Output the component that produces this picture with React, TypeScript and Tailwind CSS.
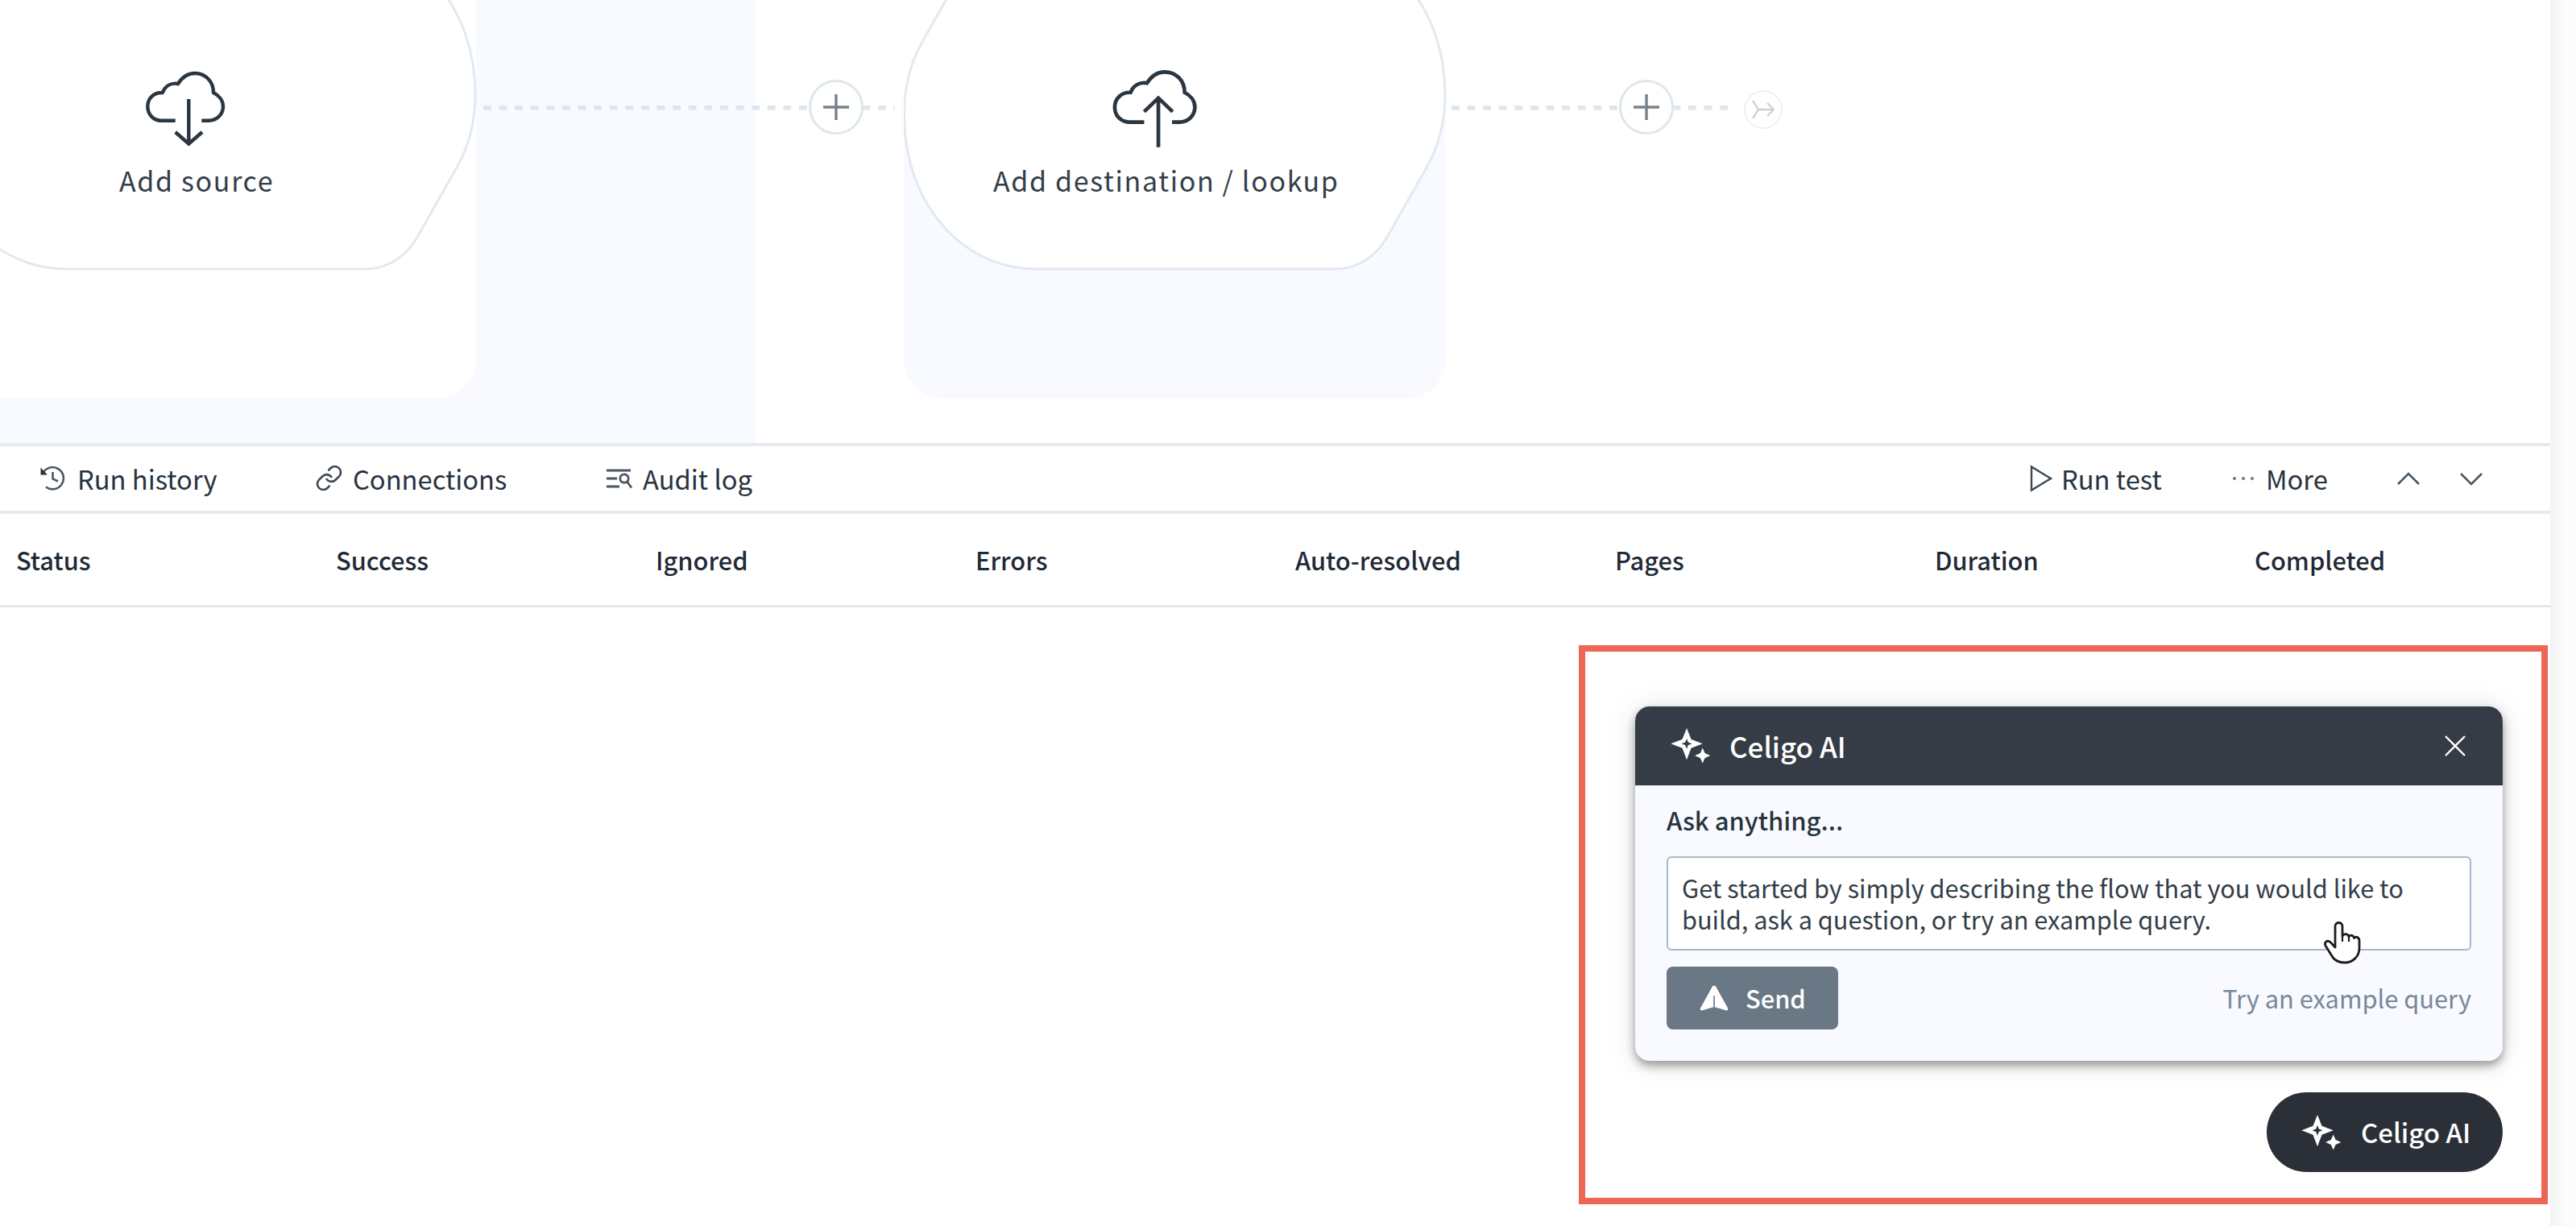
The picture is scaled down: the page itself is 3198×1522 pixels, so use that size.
import React from 'react';
import { Link } from 'lucide-react';

const columns = ['Status', 'Success', 'Ignored', 'Errors', 'Auto-resolved', 'Pages', 'Duration', 'Completed'];

const CLOUD =
    'M57.7 79.7H40C30.5 79.7 23.3 72 23.3 62.3C23.3 52 31 44.6 41.7 45C45 37 52 32.5 61 34C66 26 73 21 81.7 21C95 21 105 31 105 45C112 48.5 117 55 117 62.5C117 72 109 79.7 99 79.7H90.3';

const CloudIcon: React.FC<{ arrow: string; className: string }> = ({ arrow, className }) => (
    <svg viewBox="0 0 140 130" fill="none" stroke="#2b3640" strokeWidth="4.4" className={className}>
        <path d={CLOUD} />
        <path d={arrow} />
    </svg>
);

const NodeShape: React.FC = () => (
    <svg width="674" height="340" viewBox="0 0 674 340" className="absolute inset-0">
        <path
            d="M165 334H535C565 334 588 317 602 291L649 208C665 180 672 150 672 117C672 10 602 -74 507 -74H137C107 -74 84 -57 70 -31L23 52C7 80 0.500 110 0.500 143C0.500 250 70 334 165 334Z"
            fill="#fff"
            stroke="#e1eaf0"
            strokeWidth="3"
        />
    </svg>
);

const Sparkles: React.FC = () => (
    <svg width="50" height="44" viewBox="13 14 50 44" fill="#fff" className="shrink-0">
        <path
            fillRule="evenodd"
            d="M33 14L38.5 27.8L52.7 33.3L38.5 38.8L33 53.3L27.5 38.8L13.3 33.3L27.5 27.8ZM33 27L34.8 31.5L39.5 33.3L34.8 35.1L33 39.8L31.2 35.1L26.5 33.3L31.2 31.5Z"
        />
        <path d="M52.7 38.4L55.6 45.1L62.3 48L55.6 50.9L52.7 57.6L49.8 50.9L43.1 48L49.8 45.1Z" />
    </svg>
);

const AddButton: React.FC<{ className: string }> = ({ className }) => (
    <button className={`absolute size-[68px] rounded-full border-3 border-[#dde7ee] bg-white flex items-center justify-center ${className}`}>
        <svg width="34" height="34" viewBox="0 0 34 34" stroke="#76828e" strokeWidth="3.4">
            <path d="M17 1V33M1 17H33" />
        </svg>
    </button>
);

const FlowCanvas: React.FC = () => (
    <div className="relative h-[550px] overflow-hidden text-[#333e49]">
        <div className="absolute left-0 top-0 h-full w-[938px] bg-[#f8faff]" />

        {/* Wires */}
        <svg width="2200" height="550" className="absolute left-0 top-0" stroke="#dbe6ee" strokeWidth="5.4" strokeDasharray="9.8 9.8">
            <path d="M600 133.7H1111" />
            <path d="M1802 133.7H2146" />
        </svg>
        <AddButton className="left-[1004px] top-[99px]" />
        <AddButton className="left-[2010px] top-[99px]" />
        <div className="absolute left-[2165px] top-[112px] size-12 rounded-full border-2 border-[#edf2f6] bg-white flex items-center justify-center">
            <svg width="28" height="24" viewBox="0 0 28 24" fill="none" stroke="#cfd1d4" strokeWidth="2.4">
                <path d="M1 1L8 12L1 23M8 12H26M19 4L27 12L19 20" />
            </svg>
        </div>

        {/* Source */}
        <div className="absolute -left-[82px] -top-20 h-[575px] w-[673px] rounded-[50px] bg-white" />
        <div className="absolute -left-[82px] top-0 h-[340px] w-[672px]">
            <NodeShape />
            <CloudIcon arrow="M74.3 53V109M57.7 94L74.3 108.5L91 94" className="absolute left-[242px] top-[70px] w-[140px] h-[130px]" />
            <p className="absolute left-[230px] top-[199px] text-[34px] leading-[50px] tracking-[1.65px] whitespace-nowrap">Add source</p>
        </div>

        {/* Destination */}
        <div className="absolute left-[1122px] -top-20 h-[575px] w-[673px] rounded-[50px] bg-[#f8faff]" />
        <div className="absolute left-[1100px] top-0 h-[120px] w-[720px] bg-white" />
        <div className="absolute left-[1122px] top-0 h-[340px] w-[672px]">
            <NodeShape />
            <CloudIcon arrow="M74.3 52V109M57.7 67.5L74.3 51.5L91 67.5" className="absolute left-[237px] top-[67px] w-[149px] h-[138px]" />
            <p className="absolute left-[111px] top-[199px] text-[34px] leading-[50px] tracking-[1.65px] whitespace-nowrap">
                Add destination / lookup
            </p>
        </div>
    </div>
);

const Toolbar: React.FC = () => (
    <div className="flex h-[88px] items-center border-y-4 border-[#e3ebf1] pl-[49px] text-[32.7px]">
        <div className="flex w-[343px] items-center gap-[15px]">
            <svg width="32" height="32" viewBox="0 0 32 32" fill="none" stroke="#4a5661" strokeWidth="2.6">
                <path d="M3.5 11A13.6 13.6 0 1 1 8 26.5" />
                <path d="M1.5 2.5V11.5H10Z" fill="#2b3640" stroke="none" />
                <path d="M16.5 8V16.5L23 19.5" />
            </svg>
            Run history
        </div>
        <div className="flex w-[361px] items-center gap-[12px]">
            <Link size={35} strokeWidth={1.8} color="#3d4954" className="-ml-px" />
            Connections
        </div>
        <div className="flex items-center gap-[13px]">
            <svg width="32" height="28" viewBox="0 0 32 28" fill="none" stroke="#4a5661" strokeWidth="2.8">
                <path d="M0 4H30M0 14H13M0 24H16" />
                <circle cx="22" cy="14" r="5.2" />
                <path d="M25.5 18L31 25.5" />
            </svg>
            Audit log
        </div>

        <div className="ml-auto flex items-center">
            <div className="flex w-[251px] items-center gap-[11px]">
                <svg width="28" height="34" viewBox="0 0 28 34" fill="none" stroke="#3d4954" strokeWidth="2.4">
                    <path d="M2 2.5V31.5L26 17Z" />
                </svg>
                Run test
            </div>
            <div className="flex w-[205px] items-center gap-[14px]">
                <svg width="28" height="6" viewBox="0 0 28 6" fill="#6b7783">
                    <circle cx="3" cy="3" r="2" />
                    <circle cx="14" cy="3" r="2" />
                    <circle cx="25" cy="3" r="2" />
                </svg>
                More
            </div>
            <svg width="28" height="18" viewBox="0 0 28 18" fill="none" stroke="#4a5661" strokeWidth="2.6" className="mr-[50px]">
                <path d="M1 16L14 3L27 16" />
            </svg>
            <svg width="28" height="18" viewBox="0 0 28 18" fill="none" stroke="#4a5661" strokeWidth="2.6" className="mr-[84px] mt-[3px]">
                <path d="M1 2L14 15L27 2" />
            </svg>
        </div>
    </div>
);

const AssistantPanel: React.FC = () => (
    <div className="absolute left-[1960px] top-[801px] flex h-[694px] w-[1203px] flex-col items-end border-8 border-[#ed6555] pr-10 pt-[68px]">
        <div className="w-[1077px] h-[440px] mr-2 overflow-hidden rounded-[18px] bg-[#f8faff] shadow-[0_6px_12px_rgba(0,0,0,0.36),0_2px_36px_rgba(0,0,0,0.12)]">
            <div className="flex h-[98px] items-center bg-[#353c46] pl-11 pr-[45px] text-white">
                <Sparkles />
                <span className="ml-[23px] text-[35px] font-medium">Celigo AI</span>
                <svg width="28" height="28" viewBox="0 0 28 28" stroke="#fff" strokeWidth="2.4" className="ml-auto">
                    <path d="M2 2L26 26M26 2L2 26" />
                </svg>
            </div>
            <div className="px-[39px] pt-[21px]">
                <p className="text-[31px] leading-[44px] font-medium">Ask anything...</p>
                <div className="relative mt-[23px] h-[117px] rounded-md border-[2.5px] border-[#a9b8c6] bg-white pl-[17px] pt-[17px] text-[30.7px] leading-[39px] text-[#333e49]">
                    <p className="whitespace-nowrap">Get started by simply describing the flow that you would like to</p>
                    <p>build, ask a question, or try an example query.</p>
                    <svg width="46" height="54" viewBox="0 0 46 54" className="absolute left-[814px] top-[79px]">
                        <path
                            d="M14 32V6C14 0 23 0 23 6V18C25 14.5 30 15 31 19C33 16 37 17 37.5 20.5C40 18 44 19.5 44 24V33C44 44 35 51 26 51C17 51 12 47 9.500 42L2 30C0 26 4 22.500 8 25.500Z"
                            fill="#fff"
                            stroke="#1d1d1d"
                            strokeWidth="2.8"
                            strokeLinejoin="round"
                        />
                        <path d="M23 17V25M31 18V25" stroke="#1d1d1d" strokeWidth="2.2" />
                    </svg>
                </div>
                <div className="mt-5 flex h-[78px] items-center justify-between text-[30.8px]">
                    <button className="flex h-full w-[213px] items-center rounded-lg bg-[#6a7785] pl-[41px] font-medium text-white">
                        <svg width="36" height="32" viewBox="0 0 36 32" fill="#fff">
                            <path d="M18 0.500C19.200 0.500 20 1.200 20.600 2.400L35 28.500C36 30.500 34.500 31.800 32.500 31.200L18 27L3.500 31.200C1.500 31.800 0 30.500 1 28.500L15.400 2.400C16 1.200 16.800 0.500 18 0.500Z" />
                            <path d="M18 13V27" stroke="#6a7785" strokeWidth="1.6" />
                        </svg>
                        <span className="ml-[21px]">Send</span>
                    </button>
                    <span className="text-[#78879a]">Try an example query</span>
                </div>
            </div>
        </div>
        <button className="mr-2 mt-[39px] flex h-[99px] w-[293px] items-center rounded-full bg-[#2b3038] pl-[43px] text-[33px] font-medium text-white">
            <Sparkles />
            <span className="ml-6 whitespace-nowrap">Celigo AI</span>
        </button>
    </div>
);

const App: React.FC = () => {
    return (
        <div className="relative flex h-[1522px] w-[3198px] overflow-hidden bg-white text-[#28333e] font-['Noto_Sans_CJK_SC',sans-serif]">
            <main className="w-[3166px] shrink-0">
                <FlowCanvas />
                <Toolbar />
                <div className="flex h-[116px] items-center border-b-3 border-[#e1e9ef] pl-5 pt-px text-[30.8px] font-medium text-[#1f2a36]">
                    {columns.map((column) => (
                        <div key={column} className="w-[397px] shrink-0">
                            {column}
                        </div>
                    ))}
                </div>
            </main>
            <aside className="flex-1 bg-gradient-to-r from-[#f3f3f3] via-[#fbfbfb] to-[#fdfdfd]" />

            <AssistantPanel />
        </div>
    );
};

export default App;
